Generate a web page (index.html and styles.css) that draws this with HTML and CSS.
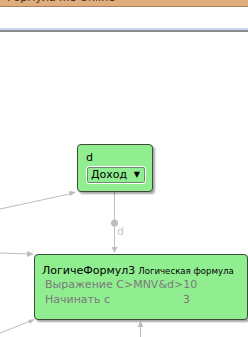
FILE: index.html
```html
<!DOCTYPE html>
<html lang="ru">
<head>
    <meta charset="UTF-8">
    <title>Схема</title>
    <link rel="stylesheet" href="styles.css">
</head>
<body>
    <div class="titlebar"><span>Формула же Online</span></div>
    <div class="toolbar"></div>

    <div class="canvas">
        <svg class="edges" width="248" height="307" viewBox="0 30 248 307">
            <g stroke="#bdbdbd" stroke-width="1" fill="none">
                <line x1="0" y1="207" x2="74" y2="191"/>
                <line x1="0" y1="251" x2="32" y2="252"/>
                <line x1="0" y1="331" x2="33" y2="318"/>
                <line x1="114.5" y1="190" x2="114.5" y2="250"/>
                <line x1="140.5" y1="322" x2="140.5" y2="337"/>
            </g>
            <g fill="#bdbdbd">
                <polygon points="76,190 69,189 70,194"/>
                <polygon points="34,252 27,249 27,255"/>
                <polygon points="35,317 28,318 30,322"/>
                <polygon points="114.5,251 111.5,245 117.5,245"/>
                <polygon points="140.5,319 137.5,325 143.5,325"/>
                <circle cx="114.5" cy="221" r="3.5"/>
            </g>
            <text x="117" y="233" class="edge-label">d</text>
        </svg>

        <!-- узел: вход d -->
        <div class="node node-input">
            <div class="node-name">d</div>
            <div class="select">Доход <span class="caret">▼</span></div>
        </div>

        <!-- узел: логическая формула -->
        <div class="node node-formula">
            <div class="node-head">
                <span class="node-title">ЛогичеФормул3</span>
                <span class="node-type">Логическая формула</span>
            </div>
            <div class="prop">Выражение C&gt;MNV&amp;d&gt;10</div>
            <div class="prop prop-row"><span>Начинать с</span><span>3</span></div>
        </div>
    </div>
</body>
</html>
```

FILE: styles.css
```css
* {
    box-sizing: border-box;
}
body {
    margin: 0;
    width: 248px;
    height: 337px;
    overflow: hidden;
    background: #fff;
    font-family: 'DejaVu Sans', Verdana, sans-serif;
}
.titlebar {
    height: 7px;
    background: #dfae7c;
    border-bottom: 1px solid #a9845e;
    overflow: hidden;
    position: relative;
}
.titlebar span {
    position: absolute;
    left: 4px;
    top: -9px;
    font-size: 11px;
    color: #3a2a1a;
}
.toolbar {
    height: 23px;
    background: #fff;
    border-bottom: 2px solid #c9d8f0;
    box-shadow: 0 2px 0 #8a8a8a;
}
.canvas {
    position: relative;
    height: 305px;
    margin-top: 2px;
    background: #fff;
}
.edges {
    position: absolute;
    left: 0;
    top: 0;
}
.edge-label {
    font-size: 11px;
    fill: #c8c8c8;
    font-family: 'DejaVu Sans', sans-serif;
}
.node {
    position: absolute;
    background: #90ee90;
    border: 1px solid #3c4a3c;
    border-radius: 4px;
    box-shadow: 2px 2px 2px rgba(0, 0, 0, 0.35);
}
.node-input {
    left: 77px;
    top: 112px;
    width: 76px;
    height: 48px;
    padding: 7px 0 0 8px;
}
.node-name {
    font-size: 11px;
    line-height: 12px;
    color: #000;
}
.select {
    margin-top: 2px;
    width: 60px;
    height: 18px;
    border: 1px solid #fff;
    border-radius: 3px;
    box-shadow: inset 0 0 0 1px #6a8a6a;
    font-size: 11px;
    line-height: 16px;
    padding-left: 4px;
    color: #000;
    display: flex;
    justify-content: space-between;
}
.caret {
    font-size: 8px;
    padding-right: 5px;
}
.node-formula {
    left: 34px;
    top: 222px;
    width: 214px;
    height: 66px;
    padding: 10px 0 0 7px;
}
.node-head {
    display: flex;
    align-items: baseline;
    gap: 3px;
    line-height: 12px;
}
.node-title {
    font-size: 11px;
    color: #000;
}
.node-type {
    font-size: 8.6px;
    color: #000;
}
.prop {
    font-size: 11px;
    line-height: 15px;
    color: #7a7a7a;
    padding-left: 3px;
}
.prop-row {
    display: flex;
    justify-content: space-between;
    width: 148px;
}
```
